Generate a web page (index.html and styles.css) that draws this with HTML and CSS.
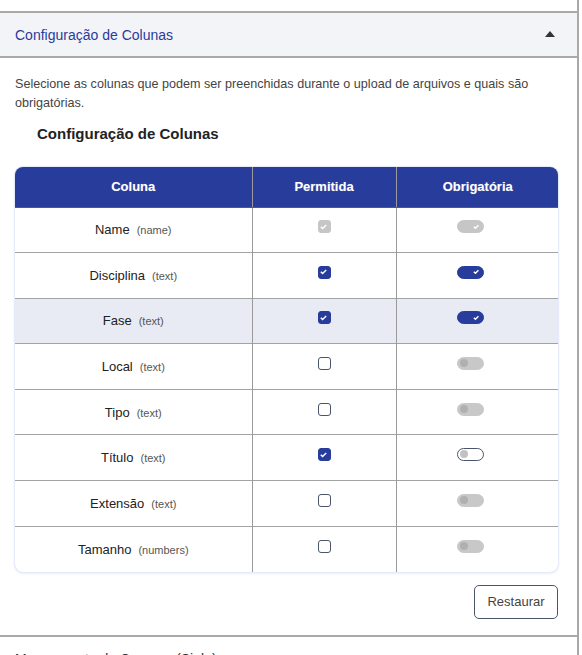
FILE: index.html
```html
<!DOCTYPE html>
<html lang="pt">
<head>
<meta charset="utf-8">
<title>Configuração de Colunas</title>
<link rel="stylesheet" href="styles.css">
</head>
<body>
<div class="panel">
  <div class="spacer"></div>
  <section class="acc-item open">
    <div class="acc-header">
      <span class="acc-title">Configuração de Colunas</span>
      <span class="caret"></span>
    </div>
    <div class="acc-body">
      <p class="desc">Selecione as colunas que podem ser preenchidas durante o upload de arquivos e quais são obrigatórias.</p>
      <h3 class="sub">Configuração de Colunas</h3>
      <div class="table-wrap">
        <table class="cols">
          <thead>
            <tr><th class="c1">Coluna</th><th class="c2">Permitida</th><th class="c3">Obrigatória</th></tr>
          </thead>
          <tbody>
            <tr>
              <td><span class="nm">Name</span><span class="ty">(name)</span></td>
              <td><span class="cb checked disabled"><svg viewBox="0 0 13 13"><path d="M3.8 6.7l1.8 1.8 3.6-3.6"/></svg></span></td>
              <td><span class="sw on disabled"><svg viewBox="0 0 26 12"><path d="M17.2 6.3l1.5 1.4 2.9-2.9"/></svg></span></td>
            </tr>
            <tr>
              <td><span class="nm">Disciplina</span><span class="ty">(text)</span></td>
              <td><span class="cb checked"><svg viewBox="0 0 13 13"><path d="M3.8 6.7l1.8 1.8 3.6-3.6"/></svg></span></td>
              <td><span class="sw on"><svg viewBox="0 0 26 12"><path d="M17.2 6.3l1.5 1.4 2.9-2.9"/></svg></span></td>
            </tr>
            <tr class="hl">
              <td><span class="nm">Fase</span><span class="ty">(text)</span></td>
              <td><span class="cb checked"><svg viewBox="0 0 13 13"><path d="M3.8 6.7l1.8 1.8 3.6-3.6"/></svg></span></td>
              <td><span class="sw on"><svg viewBox="0 0 26 12"><path d="M17.2 6.3l1.5 1.4 2.9-2.9"/></svg></span></td>
            </tr>
            <tr>
              <td><span class="nm">Local</span><span class="ty">(text)</span></td>
              <td><span class="cb"></span></td>
              <td><span class="sw off disabled"><span class="knob"></span></span></td>
            </tr>
            <tr>
              <td><span class="nm">Tipo</span><span class="ty">(text)</span></td>
              <td><span class="cb"></span></td>
              <td><span class="sw off disabled"><span class="knob"></span></span></td>
            </tr>
            <tr>
              <td><span class="nm">Título</span><span class="ty">(text)</span></td>
              <td><span class="cb checked"><svg viewBox="0 0 13 13"><path d="M3.8 6.7l1.8 1.8 3.6-3.6"/></svg></span></td>
              <td><span class="sw off"><span class="knob"></span></span></td>
            </tr>
            <tr>
              <td><span class="nm">Extensão</span><span class="ty">(text)</span></td>
              <td><span class="cb"></span></td>
              <td><span class="sw off disabled"><span class="knob"></span></span></td>
            </tr>
            <tr>
              <td><span class="nm">Tamanho</span><span class="ty">(numbers)</span></td>
              <td><span class="cb"></span></td>
              <td><span class="sw off disabled"><span class="knob"></span></span></td>
            </tr>
          </tbody>
        </table>
      </div>
      <div class="actions">
        <button class="btn" type="button">Restaurar</button>
      </div>
    </div>
  </section>
  <section class="acc-item">
    <div class="acc-header plain">
      <span class="acc-title dark">Mapeamento de Campos (Sigla)</span>
    </div>
  </section>
</div>
</body>
</html>
```
FILE: styles.css
```css
* { box-sizing: border-box; }
html, body { margin: 0; padding: 0; background: #fff; }
body {
  font-family: "Liberation Sans", Arial, sans-serif;
  color: #333;
  overflow: hidden;
  height: 655px;
}
.panel {
  width: 579px;
  min-height: 655px;
  border-right: 2px solid #a9a9a9;
}
.spacer { height: 11px; }
.acc-item { border-top: 2px solid #a9a9a9; }
.acc-header {
  background: #f3f4f8;
  display: flex;
  align-items: center;
  justify-content: space-between;
  padding: 0 22px 0 15px;
  border-bottom: 2px solid #a9a9a9;
  height: 45px;
}
.acc-header.plain { background: #fff; border-bottom: none; align-items: flex-start; padding-top: 14px; }
.acc-title { font-size: 14px; color: #2b3a9b; }
.acc-title.dark { color: #333; }
.caret {
  width: 0; height: 0;
  border-left: 5.5px solid transparent;
  border-right: 5.5px solid transparent;
  border-bottom: 6px solid #333;
  margin-top: -2px;
}
.acc-body { padding: 17px 19px 16px 15px; }
.desc {
  margin: 0;
  font-size: 12.6px;
  line-height: 19px;
  color: #444;
}
.sub {
  margin: 11px 0 0 22px;
  font-size: 15px;
  font-weight: bold;
  color: #222;
  line-height: 20px;
}
.table-wrap {
  margin-top: 23px;
  border-radius: 8px;
  overflow: hidden;
  box-shadow: 0 0 0 1px #e6eafa, 0 1px 3px rgba(50, 70, 180, 0.18);
}
.cols {
  width: 100%;
  border-collapse: collapse;
  table-layout: fixed;
}
.cols th {
  background: #283c9b;
  color: #fff;
  font-size: 13px;
  font-weight: bold;
  height: 40px;
  border-bottom: 1px solid #3d55c9;
  text-shadow: 0 0 1px rgba(255,255,255,0.3);
}
.cols th + th { border-left: 1px solid #9a9a9a; }
.c1 { width: 237px; }
.c2 { width: 144px; }
.c3 { width: 163px; }
.cols td {
  height: 45.6px;
  text-align: center;
  vertical-align: middle;
  border-top: 1px solid #a3a3a3;
  padding: 0;
  font-size: 13px;
  color: #222;
}
.cols tbody tr:first-child td { border-top: none; }
.cols td + td { border-left: 1px solid #9a9a9a; }
.cols tr.hl td { background: #e8ebf3; }
.nm { font-size: 13px; color: #222; }
.ty { font-size: 11px; color: #555; margin-left: 7px; }
.cb {
  display: inline-block;
  width: 13px; height: 13px;
  border: 1.5px solid #4a5568;
  border-radius: 3px;
  background: #fff;
  vertical-align: middle;
  position: relative;
  margin-bottom: 6px;
}
.cb svg { display: none; }
.cb.checked { background: #283c9b; border-color: #283c9b; }
.cb.checked.disabled { background: #c6c6c6; border-color: #c6c6c6; }
.cb.checked svg {
  display: block;
  position: absolute;
  left: -1.5px; top: -1.5px;
  width: 13px; height: 13px;
  fill: none; stroke: #fff; stroke-width: 1.4;
}
.sw {
  display: inline-block;
  width: 27px; height: 13px;
  border-radius: 7px;
  vertical-align: middle;
  position: relative;
  margin-right: 15px;
  margin-bottom: 6px;
  border: 1.5px solid #4a5568;
  background: #fff;
}
.sw svg {
  position: absolute; left: -1.5px; top: -1.5px;
  width: 27px; height: 13px;
  fill: none; stroke: #fff; stroke-width: 1.4;
}
.sw.on { background: #283c9b; border-color: #283c9b; }
.sw.on.disabled { background: #c6c6c6; border-color: #c6c6c6; }
.sw.off.disabled { background: #c8c8c8; border-color: #c8c8c8; }
.knob {
  position: absolute;
  left: 2px; top: 1px;
  width: 8px; height: 8px;
  border-radius: 50%;
  background: #c2c2c2;
}
.sw.off.disabled .knob { background: #b0b0b0; }
.actions {
  display: flex;
  justify-content: flex-end;
  margin-top: 13px;
}
.btn {
  font-family: "Liberation Sans", Arial, sans-serif;
  font-size: 13px;
  color: #444;
  background: #fff;
  border: 1px solid #4a5568;
  border-radius: 5px;
  height: 34px;
  width: 84px;
  padding: 0;
}
```
